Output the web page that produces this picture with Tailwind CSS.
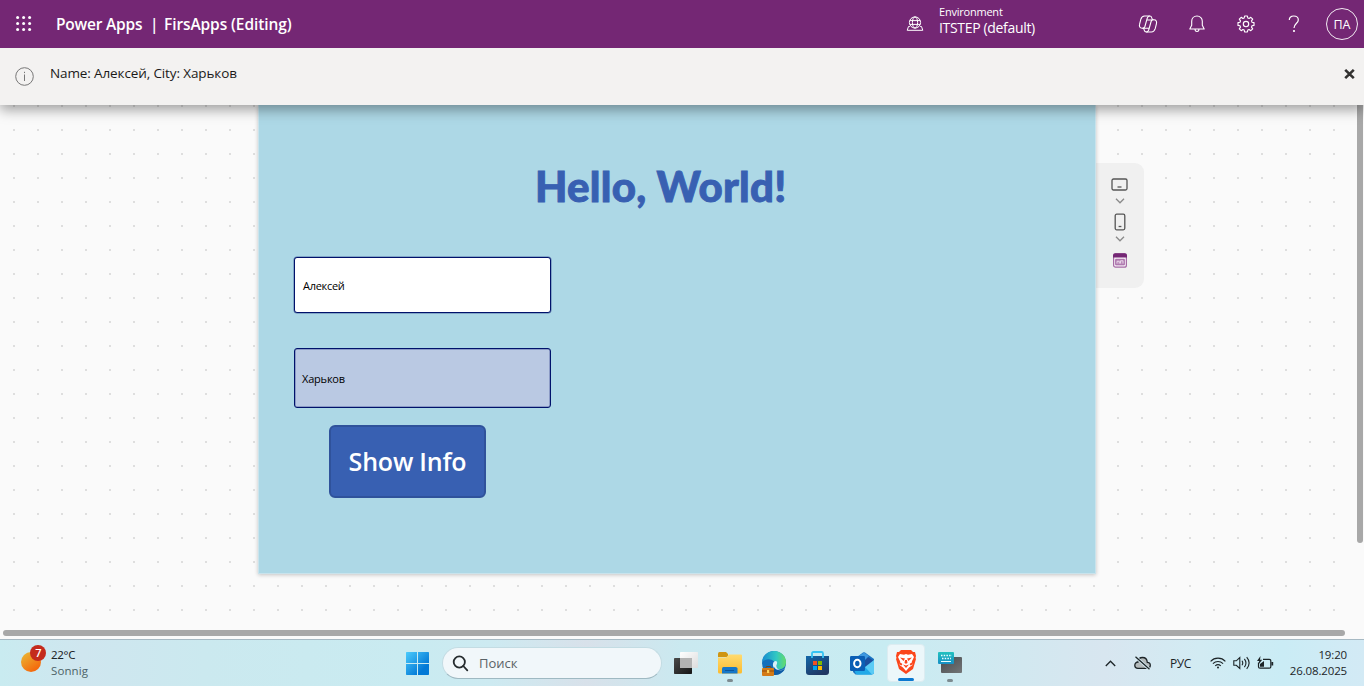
<!DOCTYPE html>
<html lang="ru">
<head>
<meta charset="utf-8">
<title>Power Apps</title>
<script src="https://cdn.jsdelivr.net/npm/@tailwindcss/browser@4"></script>
</head>
<body class="w-[1364px] h-[686px] overflow-hidden flex flex-col font-['Open_Sans','Noto_Sans',sans-serif] bg-[#fafafa]">

<header class="h-12 shrink-0 bg-[#742774] text-white flex items-center relative z-20">
  <svg class="ml-4 w-4 h-4" viewBox="0 0 16 16" fill="#fff"><g id="r"><circle cx="1.6" cy="1.5" r="1.5"/><circle cx="7.6" cy="1.5" r="1.5"/><circle cx="13.6" cy="1.5" r="1.5"/></g><use href="#r" y="6"/><use href="#r" y="12"/></svg>
  <div class="ml-6 w-[822px] flex items-center text-[15.5px] font-semibold whitespace-nowrap leading-6">
    <span class="w-[94px] tracking-[-0.2px]">Power Apps</span><span class="w-[14px]">|</span><span class="tracking-[-0.1px]">FirsApps (Editing)</span>
  </div>
  <svg class="ml-[28px] w-[18px] h-[16px]" viewBox="0 0 18 16" fill="none" stroke="#fff"><circle cx="9" cy="6.5" r="5.6"/><ellipse cx="9" cy="6.5" rx="2.6" ry="5.6"/><path d="M3.8 4.6h10.4M3.8 8.4h10.4M3.8 10.5H2.500L1.200 14.300h15.600l-1.300-3.800h-1.300"/></svg>
  <div class="ml-[15px] mb-[6px] w-[199px] flex flex-col whitespace-nowrap">
    <span class="text-[11px] leading-[14px] tracking-[-0.22px]">Environment</span>
    <span class="text-[14px] leading-[18px] tracking-[-0.33px]">ITSTEP (default)</span>
  </div>
  <svg class="w-5 h-[18px]" viewBox="0 0 20 18" fill="none" stroke="#fff" stroke-width="1.1" stroke-linejoin="round"><path d="M6.2 13.2H4.1C1.8 13.2 1 11.4 1.6 9.2L2.8 4.3C3.5 2 4.6 1 6.6 1h5.2c1.3 0 1.7.8 2 1.9l.6 1.9"/><path d="M13.8 4.8h2.1c2.3 0 3.1 1.8 2.5 4l-1.2 4.9c-.7 2.300-1.800 3.300-3.800 3.300H8.200c-1.300 0-1.700-.8-2-1.900l-.6-1.900"/><path d="M11.800 1C10.300 1 9.600 2 9.100 3.700L6.900 11.500c-.4 1.200-1 1.700-2.400 1.700M8.200 17c1.500 0 2.200-1 2.700-2.700l2.200-7.800c.4-1.200 1-1.700 2.400-1.700M8.700 5h5.100M6.200 13.200h5"/></svg>
  <svg class="ml-[31px] w-4 h-[18px]" viewBox="0 0 16 18" fill="none" stroke="#fff" stroke-width="1.1" stroke-linejoin="round"><path d="M8 1C4.800 1 2.700 3.300 2.700 6.300v3.900L.8 14h14.400l-1.900-3.800V6.300C13.300 3.300 11.200 1 8 1ZM6 14c0 3.300 4 3.300 4 0"/></svg>
  <svg class="ml-[32px] w-[18px] h-[18px]" viewBox="0 0 18 18" fill="none" stroke="#fff" stroke-width="1.15" stroke-linejoin="round"><circle cx="9" cy="9" r="2.7"/><path d="M7.600 1h2.800l.4 2 1.300.5 1.700-1.200 1.900 1.900-1.200 1.700.5 1.300 2 .4v2.800l-2 .4-.5 1.300 1.200 1.700-1.900 1.900-1.700-1.200-1.300.5-.4 2H7.600l-.4-2-1.300-.5-1.700 1.200-1.900-1.900 1.200-1.700-.5-1.300-2-.4V7.600l2-.4.5-1.300-1.200-1.700 1.900-1.900 1.700 1.200 1.300-.5Z"/></svg>
  <svg class="ml-[33px] w-3 h-[18px]" viewBox="0 0 12 18" fill="none" stroke="#fff" stroke-width="1.2"><path d="M1.300 5C1.300 2.500 3.200 1 5.700 1s4.600 1.400 4.600 3.900c0 3.500-4.300 3.900-4.300 8"/><circle cx="6" cy="16" r=".5"/></svg>
  <div class="ml-[26px] w-8 h-8 rounded-full border border-white/90 flex items-center justify-center text-[12.5px] tracking-[-0.1px] pt-[3px]">ПА</div>
</header>

<div class="h-[57px] shrink-0 bg-[#f3f2f1] flex items-start relative z-10 shadow-[0_5px_12px_rgba(0,0,0,0.36)]">
  <svg class="ml-[15px] mt-[19px] w-[19px] h-[19px]" viewBox="0 0 19 19" fill="none" stroke="#777"><circle cx="9.5" cy="9.5" r="8.8"/><path d="M9.500 7.500V14M9.500 4.800v1.300"/></svg>
  <span class="ml-4 mt-[15px] text-[13.5px] leading-5 text-[#1b1a19] tracking-[-0.12px] whitespace-nowrap">Name: Алексей, City: Харьков</span>
  <svg class="ml-auto mr-[9px] mt-[21px] w-[11px] h-[10px]" viewBox="0 0 11 10" stroke="#323130" stroke-width="2.6"><path d="m1.200.9 8.600 8.200m0-8.200L1.200 9.100"/></svg>
</div>

<main class="flex-1 relative flex items-start pl-[258px]">
  <svg class="absolute left-0 top-0 w-[1356px] h-[524px]"><defs><pattern id="dots" width="24" height="24" patternUnits="userSpaceOnUse"><rect x="13" y="0" width="2" height="2" fill="#dedede"/></pattern></defs><rect width="1356" height="524" fill="url(#dots)"/></svg>
  <section class="relative z-[1] w-[838px] h-[469px] bg-[#add8e6] border-x border-b border-[#c9e3ec] shadow-[0_1px_4px_rgba(0,0,0,0.22)] flex flex-col items-start pl-[35px]">
    <h1 class="ml-[241px] mt-[55px] h-[53px] leading-[52px] font-['Lato'] font-black text-[42px] tracking-[0.25px] text-[#3860b2] [-webkit-text-stroke:0.9px_#3860b2] whitespace-nowrap">Hello, World!</h1>
    <div class="mt-[44px] w-[257px] h-[56px] rounded-[3px] border border-[#00126b] shadow-[0_0_0_0.5px_#00126b80] bg-white flex items-center pl-[8px] pt-[2px] text-[11px] tracking-[-0.3px] text-black">Алексей</div>
    <div class="mt-[35px] w-[257px] h-[60px] rounded-[3px] border border-[#00126b] shadow-[inset_0_0_0_0.5px_#00126b80] bg-[#bac9e3] flex items-center pl-[7px] pt-[2px] text-[11px] tracking-[-0.2px] text-black">Харьков</div>
    <button class="ml-[35px] mt-[17px] w-[157px] h-[73px] rounded-[6px] border-2 border-[#2f529b] bg-[#3860b2] text-white font-semibold text-[25px] tracking-[-0.2px] whitespace-nowrap">Show Info</button>
  </section>
  <aside class="relative mt-[58px] w-12 h-[125px] rounded-r-[9px] bg-[#f0f0f0] flex flex-col items-center pt-[15px] pr-px">
    <svg class="w-[17px] h-[13px]" viewBox="0 0 17 13" fill="none" stroke="#555" stroke-width="1.3"><rect x="1" y="1" width="15" height="11" rx="1.5"/><path d="M6.500 9h4"/></svg>
    <svg class="mt-[7px] w-[10px] h-[6px]" viewBox="0 0 10 6" fill="none" stroke="#8a8a8a" stroke-width="1.3"><path d="m1 .8 4 4 4-4"/></svg>
    <svg class="mt-[9px] w-[12px] h-[18px]" viewBox="0 0 12 18" fill="none" stroke="#555" stroke-width="1.3"><rect x="1.2" y="1.2" width="9.6" height="15.6" rx="1.5"/><path d="M4.600 13.500h2.800"/></svg>
    <svg class="mt-[5px] w-[10px] h-[6px]" viewBox="0 0 10 6" fill="none" stroke="#8a8a8a" stroke-width="1.3"><path d="m1 .8 4 4 4-4"/></svg>
    <svg class="mt-[11px] w-[14px] h-[15px]" viewBox="0 0 14 15"><rect x=".6" y=".8" width="12.8" height="13.4" rx="2" fill="#f7eef7" stroke="#a56ba5" stroke-width="1.2"/><path d="M0 4.500V2.500Q0 .2 2.300.2h9.400Q14 .2 14 2.500v2Z" fill="#742774"/><path d="M2.700 6.300h8.600v5.500H2.700Z" fill="#b889b8" stroke="#a56ba5"/><path d="M4 10.500V8.300h2.300v2.200M7.500 10.500V7.800h2.500v2.700" fill="none" stroke="#f3e4f3" stroke-width=".8"/></svg>
  </aside>
  <div class="absolute right-[1px] top-0 w-[6px] h-[438px] bg-[#a8a8a8] rounded-b-[3px]"></div>
  <div class="absolute left-[3px] bottom-[3px] w-[1342px] h-[6px] bg-[#a8a8a8] rounded-[3px]"></div>
</main>

<footer class="h-[47px] shrink-0 border-t border-[#a6b9c3] flex items-center relative bg-[linear-gradient(90deg,#c9ebf0_0%,#cfe6ef_6%,#cbe9ef_15%,#c9ebf1_30%,#cdeaf1_36%,#d8e1ea_43%,#cae9f0_50%,#c8ecf2_65%,#d2e8f0_75%,#d8e6f0_81%,#d2ebf3_88%,#caecf5_94%,#d3eaf5_100%)] text-[#1c2427]">
  <div class="ml-[21px] w-[385px] flex items-center">
    <svg class="w-[26px] h-[28px] mb-[9px]" viewBox="0 0 26 28"><defs><linearGradient id="sun" x1="0" y1="0" x2=".7" y2="1"><stop stop-color="#e9bd37"/><stop offset="1" stop-color="#f5640a"/></linearGradient></defs><circle cx="10" cy="17" r="10" fill="url(#sun)"/><circle cx="17" cy="8" r="8" fill="#c42b1c"/><text x="17.3" y="12" font-family="Open Sans" font-size="11" font-weight="600" fill="#fff" text-anchor="middle">7</text></svg>
    <div class="ml-[4px] text-[11.5px] leading-4 mb-[1px] whitespace-nowrap"><div class="tracking-[-0.3px] font-['Noto_Sans']">22°C</div><div class="text-[#4c6267] tracking-[0.1px]">Sonnig</div></div>
  </div>
  <svg class="w-[23px] h-[23px] mt-px" viewBox="0 0 23 23"><defs><linearGradient id="win" x1="0" y1="0" x2="23" y2="23" gradientUnits="userSpaceOnUse"><stop stop-color="#4ccbfc"/><stop offset=".75" stop-color="#0279d6"/></linearGradient></defs><path d="M.7 0H11v11H0V.7Q0 0 .7 0ZM12 0h10.300q.7 0 .7.7V11H12ZM0 12h11v11H.7q-.7 0-.7-.7ZM12 12h11v10.300q0 .7-.7.7H12Z" fill="url(#win)"/></svg>
  <div class="ml-[13px] w-[220px] h-8 rounded-full bg-[#f1f7fa] border border-[#c3dce3] border-b-[#9fb9c2] flex items-center">
    <svg class="ml-[9px] w-[17px] h-[17px]" viewBox="0 0 17 17" fill="none" stroke="#252b2e" stroke-width="1.8"><circle cx="7.3" cy="7" r="5.6"/><path d="m11.300 11 4 4.300" stroke-linecap="round"/></svg>
    <span class="ml-[10px] text-[13px] text-[#5b6367] pt-px">Поиск</span>
  </div>
  <svg class="ml-[12px] w-6 h-6" viewBox="0 0 24 24"><defs><linearGradient id="tv" x2="1" y2="1"><stop stop-color="#4a4a4a"/><stop offset="1" stop-color="#151515"/></linearGradient><linearGradient id="tf" x2="1" y2="1"><stop stop-color="#fff"/><stop offset="1" stop-color="#dcdcdc"/></linearGradient></defs><rect y="7" width="18" height="16" rx=".7" fill="url(#tv)"/><rect x="6" y="1" width="18" height="16" rx=".7" fill="url(#tf)"/><path d="M6 7h12v10H6Z" fill="#b3b3b3"/></svg>
  <div class="ml-[20px] h-full w-6 relative flex items-center justify-center">
    <svg class="w-6 h-[22px]" viewBox="0 0 24 22"><defs><linearGradient id="fd" x2="0" y2="1"><stop stop-color="#ffdb70"/><stop offset="1" stop-color="#fcbb2e"/></linearGradient></defs><path d="M0 2Q0 0 1.500 0H8l2 2v3H0Z" fill="#cf9512"/><path d="M0 5.500h8L11 2.500h12q1 0 1 1V20q0 1.500-1.500 1.500h-21Q0 21.500 0 20Z" fill="url(#fd)"/><path d="M4 21.500V16.500Q4 15 5.500 15h12q2 0 2 1.500v5Z" fill="#1677c8"/><path d="M7 18h9v1H7Z" fill="#0c559a"/></svg>
    <div class="absolute bottom-[4px] w-[6px] h-[3px] rounded-full bg-[#7d8b90]"></div>
  </div>
  <svg class="ml-[20px] w-[24px] h-[25px]" viewBox="0 0 24 25"><defs><linearGradient id="edge" x2="1"><stop stop-color="#168bd0"/><stop offset=".6" stop-color="#31c8c3"/><stop offset="1" stop-color="#65dc68"/></linearGradient></defs><circle cx="12" cy="12" r="12" fill="#126fbb"/><path d="M0 11C1 4 6 0 12 0c7 0 12 5 12 11 0 5-4 8-8 7-3-.7-1.500-2-1.500-4C14.500 10 6 5 0 11Z" fill="url(#edge)"/><path d="M12 17c-2-3-1-7 1.500-7 2.500.3 1.500 2.500 1 4.500-.5 4 5 6 8.500 3.500L20 20h-7Z" fill="#d8f1f7"/><path d="M12 16c2 4 8 4 11 2C20 23 16 24 12 24Z" fill="#105ca6"/><rect x="4" y="15.5" width="5" height="3" rx="1" fill="none" stroke="#7e430d"/><rect y="17" width="12" height="8" rx="1" fill="#d47a16"/><path d="M0 20h12" stroke="#8f4a0c"/><rect x="5" y="19" width="2.2" height="3" fill="#ffd259"/></svg>
  <svg class="ml-[20px] w-[23px] h-6" viewBox="0 0 23 24"><defs><linearGradient id="store" x2=".6" y2="1"><stop stop-color="#1267a9"/><stop offset="1" stop-color="#213763"/></linearGradient></defs><path d="M0 5h23v16q0 3-3 3H3q-3 0-3-3Z" fill="url(#store)"/><path d="M6 7V2.500Q6 1 7.500 1h8Q17 1 17 2.500V7" fill="none" stroke="#36c3f2" stroke-width="1.8"/><path d="M7 10h4v4H7z" fill="#f25022"/><path d="M12 10h4v4h-4z" fill="#7fba00"/><path d="M7 15h4v4H7z" fill="#00a4ef"/><path d="M12 15h4v4h-4z" fill="#ffb900"/></svg>
  <svg class="ml-[21px] w-6 h-[23px]" viewBox="0 0 24 23"><path d="M3 8 13 .5Q14 0 15 .5L24 7v13q0 2.500-2.500 2.500h-16L3 20Z" fill="#1a73c2"/><path d="m9 6 6-3 9 6-10 8Z" fill="#1b4f9f"/><path d="m7 5 7-4.500 5 3.500-6 6-6-3Z" fill="#3f98df"/><path d="M24 8v12q0 2.500-2.500 2.500H7L15 15Z" fill="#5acbf5"/><path d="M5 15.500 15 15l7 7.400H7.500Q5 22.400 5 20Z" fill="#22a9e8"/><rect y="4" width="15" height="15" rx="1.2" fill="#0b5fb5"/><ellipse cx="7.3" cy="11.5" rx="3.2" ry="3.8" fill="none" stroke="#fff" stroke-width="2"/></svg>
  <div class="ml-[13px] relative w-[38px] h-[38px] rounded-[4px] bg-[#ecf7fa] border border-[#dcecf1] flex justify-center items-center">
    <svg class="w-5 h-6 mb-[2px]" viewBox="0 0 20 24"><path d="m5 0h10l2 2h2l1 4-.5 2 .5 1-3 10-7 5-7-5L0 9l.5-1L0 6l1-4h2Z" fill="#fb471c"/><path d="m4 4 4 .8 2-.8 2 .8 4-.8 2 3-2.200 4.500.7 3.500-3.500 2.500L10 21l-3-3.500L3.500 15l.7-3.500L2 7Z" fill="#fff"/><path d="m4 7.500 5 1-1.500 2.500Zm12 0-5 1 1.500 2.500ZM3.500 12l3 2-1 1.500-2-1ZM16.500 12l-3 2 1 1.500 2-1ZM7 14.500l3 1 3-1-3 3.500ZM9 10h2l.5 3-1.500.8L8.500 13Z" fill="#fb471c"/></svg>
    <div class="absolute bottom-0 w-4 h-[3px] rounded-full bg-[#0b78d0]"></div>
  </div>
  <div class="ml-[13px] h-full w-6 relative">
    <svg class="mt-[12px] w-6 h-[22px]" viewBox="0 0 24 22"><defs><linearGradient id="kb" x2="0" y2="1"><stop stop-color="#22c2bf"/><stop offset="1" stop-color="#168fc5"/></linearGradient><linearGradient id="kd" x2="1" y2="1"><stop stop-color="#484a4d"/><stop offset="1" stop-color="#737678"/></linearGradient></defs><rect x="3" y="5" width="21" height="16" rx="1" fill="url(#kd)"/><rect width="16" height="12" rx="1" fill="url(#kb)"/><path d="M3 3.500h11M4 6.500h9" stroke="#e9ffff" stroke-width="1.3" stroke-dasharray="1.5 1.2"/><path d="M3 9.500h10" stroke="#e9ffff"/></svg>
    <div class="absolute bottom-[4px] left-[9px] w-[6px] h-[3px] rounded-full bg-[#7d8b90]"></div>
  </div>
  <div class="ml-auto mr-[17px] flex items-center">
    <svg class="w-[11px] h-[7px]" viewBox="0 0 11 7" fill="none" stroke="#1c2427" stroke-width="1.3"><path d="m.8 6 4.700-4.800L10.200 6"/></svg>
    <svg class="ml-[18px] w-[17px] h-[14px]" viewBox="0 0 17 14" fill="none" stroke="#1c2427" stroke-width="1.3"><path d="M4 12.300h9.300c1.700 0 3-1.300 3-3s-1.300-3-3-3C13 3.300 11 1.500 8.500 1.500S4.200 3.300 4 6C2.200 6 .8 7.400.8 9.200S2.200 12.300 4 12.300Z" fill="#b5bbbc"/><path d="m1.500.8 14 12.500" stroke="#d5eaf2" stroke-width="3"/><path d="m1.500.8 14 12.500"/></svg>
    <span class="ml-[19px] w-[22px] text-[12px] tracking-[-0.5px] whitespace-nowrap pt-px">РУС</span>
    <svg class="ml-[18px] w-4 h-3" viewBox="0 0 16 12" fill="none" stroke="#1c2427" stroke-width="1.1"><path d="M.6 4.300c4-4.300 10.800-4.300 14.800 0M2.900 6.600c3-2.900 7.200-2.900 10.200 0M5.200 8.800c1.700-1.500 3.900-1.500 5.600 0"/><circle cx="8" cy="10.6" r="1" fill="#1c2427" stroke="none"/></svg>
    <svg class="ml-[7px] w-[17px] h-[14px]" viewBox="0 0 17 14" fill="none" stroke="#1c2427" stroke-width="1.1"><path d="M.8 4.800h2.500L6.800 1.500v11L3.300 9.300H.8ZM9 4.700c1 1.500 1 3.100 0 4.600M11.400 2.800c2 2.700 2 5.700 0 8.400M13.700 1.200c3 3.600 3 8 0 11.600"/></svg>
    <svg class="ml-[7px] w-[17px] h-[14px]" viewBox="0 0 17 14" fill="none" stroke="#1c2427" stroke-width="1.2"><path d="M6 3.300h6.300q1.500 0 1.500 1.500v5.900q0 1.500-1.500 1.500H3q-1.500 0-1.500-1.500V6.500"/><path d="M15.300 6v3.500" stroke-width="1.8"/><path d="M3.500 0 0 5h2.200l-.7 3.500L5.200 3.700H3ZM3 10.700V8l4-3v5.700Z" fill="#1c2427" stroke="none"/></svg>
    <div class="ml-[15px] mb-[1px] w-[58px] text-right text-[11.5px] leading-4 tracking-[-0.15px] whitespace-nowrap"><div>19:20</div><div>26.08.2025</div></div>
  </div>
</footer>
</body>
</html>
